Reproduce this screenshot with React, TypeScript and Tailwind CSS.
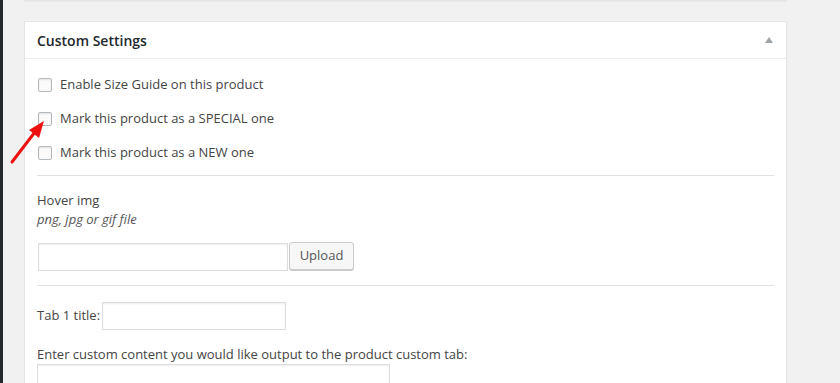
import React from "react";

const CHECKS = [
  "Enable Size Guide on this product",
  "Mark this product as a SPECIAL one",
  "Mark this product as a NEW one",
];

function Checkbox() {
  return (
    <span className="ml-px mr-[8px] inline-block h-[14px] w-[14px] shrink-0 rounded-[2px] border border-[#b4b9be] bg-[#fbfbfb] shadow-[inset_0_1px_2px_rgba(0,0,0,0.1)]" />
  );
}

export default function App() {
  return (
    <div
      className="relative flex h-[383px] w-[840px] overflow-hidden bg-[#f1f1f1] text-[13px] text-[#444]"
      style={{ fontFamily: '"Open Sans", "Liberation Sans", sans-serif' }}
    >
      {/* admin menu edge */}
      <div className="w-[3px] shrink-0 bg-[#23282d]" />

      <div className="flex w-[784px] flex-col pl-[21px]">
        {/* previous box bottom */}
        <div className="h-[2px] w-[763px] border-x border-b border-[#e5e5e5] bg-white shadow-[0_1px_1px_rgba(0,0,0,0.04)]" />

        {/* Custom Settings box */}
        <div className="mt-[20px] w-[763px] flex-1 border border-[#e5e5e5] bg-white shadow-[0_1px_1px_rgba(0,0,0,0.04)]">
          <div className="flex h-[37px] items-center justify-between border-b border-[#eee] pl-[12px] pr-[13px]">
            <h3 className="text-[14px] font-semibold text-[#23282d]">Custom Settings</h3>
            <span className="mt-[-1px] h-0 w-0 border-x-[4px] border-b-[6px] border-x-transparent border-b-[#a0a5aa]" />
          </div>

          <div className="px-[12px] pt-[9px]">
            {CHECKS.map((label) => (
              <label key={label} className="flex h-[34px] items-center">
                <Checkbox />
                <span>{label}</span>
              </label>
            ))}

            <div className="mt-[5px] h-px bg-[#e1e1e1]" />

            <div className="mt-[15px] leading-[18px]">Hover img</div>
            <div className="mt-px italic leading-[18px] text-[#555]">png, jpg or gif file</div>

            <div className="mt-[15px] flex items-center">
              <div className="ml-px h-[28px] w-[250px] border border-[#ddd] bg-white shadow-[inset_0_1px_2px_rgba(0,0,0,0.07)]" />
              <button className="ml-px mt-[-2px] h-[28px] w-[65px] rounded-[3px] border border-[#ccc] bg-[#f7f7f7] text-[13px] text-[#555] shadow-[0_1px_0_#ccc]">
                Upload
              </button>
            </div>

            <div className="mt-[14px] h-px bg-[#e1e1e1]" />

            <div className="mt-[16px] flex items-center">
              <span className="mr-[2px]">Tab 1 title:</span>
              <div className="h-[28px] w-[184px] border border-[#ddd] bg-white shadow-[inset_0_1px_2px_rgba(0,0,0,0.07)]" />
            </div>

            <div className="mt-[15px] leading-[18px]">
              Enter custom content you would like output to the product custom tab:
            </div>
            <div className="mt-px h-[40px] w-[353px] border border-[#ddd] bg-white shadow-[inset_0_1px_2px_rgba(0,0,0,0.07)]" />
          </div>
        </div>
      </div>

      {/* annotation arrow */}
      <svg className="absolute left-0 top-0" width="60" height="180" viewBox="0 0 60 180">
        <line x1="12" y1="162" x2="35" y2="132" stroke="#ee1111" strokeWidth="3" strokeLinecap="round" />
        <polygon points="44,121 39,138 29,130" fill="#ee1111" />
      </svg>
    </div>
  );
}
